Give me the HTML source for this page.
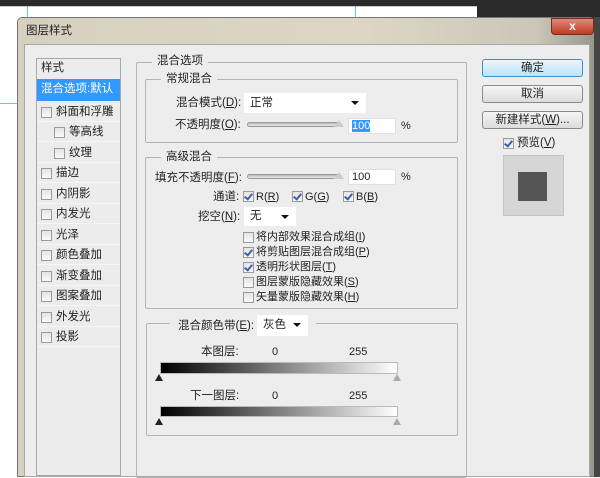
<!DOCTYPE html>
<html><head><meta charset="utf-8"><style>
*{margin:0;padding:0;box-sizing:border-box}
body{width:600px;height:477px;overflow:hidden;background:#fff;position:relative;font-family:"Liberation Sans","Noto Sans CJK SC",sans-serif;font-size:11px;color:#222}
.a{position:absolute}
.t{position:absolute;white-space:nowrap;line-height:14px}
.box{position:absolute;border:1px solid #b4b4b4;border-radius:2px}
.lg{position:absolute;background:#ededed;padding:0 5px;line-height:14px;font-size:11.5px}
.cb{position:absolute;width:11px;height:11px;border:1px solid #9a9a9a;background:linear-gradient(#e4e4e4,#fafafa)}
.cb.on::after{content:"";position:absolute;left:2px;top:0px;width:3px;height:6px;border:solid #3a5fb0;border-width:0 2px 2px 0;transform:rotate(40deg)}
.btn{position:absolute;left:482px;width:101px;height:18px;border:1px solid #8a8a8a;border-radius:3px;background:linear-gradient(#f6f6f6,#dcdcdc);text-align:center;line-height:16px;font-size:11.5px}
.dd{position:absolute;background:#fff;line-height:20px;padding-left:6px;font-size:11.5px}
.dd::after{content:"";position:absolute;right:7px;top:8px;border:4px solid transparent;border-top:4px solid #111;border-bottom:0}
.sl{position:absolute;height:5px;border:1px solid #999;border-radius:3px;background:linear-gradient(#bbb,#e8e8e8)}
.inp{position:absolute;background:#fff;border:1px solid #e0e0e0;line-height:14px;padding-left:3px}
.li{position:absolute;left:37px;width:83px;height:20px;border-bottom:1px solid #f6f6f6;line-height:21px;font-size:11.5px}
.li .cb{top:5px}
</style></head><body>
<div class="a" style="left:0;top:0;width:600px;height:6px;background:#2a2a2a"></div>
<div class="a" style="left:477px;top:0;width:123px;height:18px;background:#2a2a2a"></div>
<div class="a" style="left:0;top:6px;width:477px;height:1px;background:#ccc"></div>
<div class="a" style="left:27px;top:6px;width:1px;height:12px;background:#4dd"></div>
<div class="a" style="left:355px;top:6px;width:1px;height:12px;background:#4dd"></div>
<div class="a" style="left:0;top:103px;width:18px;height:1px;background:#4dd"></div>
<div class="a" style="left:17px;top:17px;width:578px;height:460px;background:linear-gradient(90deg,#d6d0bf,#ddd6c4 60%,#cbc6b8 90%,#9a968c);border:1px solid #777;border-radius:5px 5px 0 0"></div>
<div class="a" style="left:594px;top:17px;width:6px;height:460px;background:#444"></div>
<div class="t" style="left:26px;top:24px;font-size:11.5px">图层样式</div>
<div class="a" style="left:551px;top:18px;width:43px;height:17px;border-radius:0 0 4px 4px;background:linear-gradient(#e08a7a,#c23b22);border:1px solid #7a2a1a;color:#fff;text-align:center;font-weight:bold;line-height:15px;font-size:12px">x</div>
<div class="a" style="left:24px;top:44px;width:566px;height:433px;background:#ededed;border:1px solid #a9a9a9"></div>
<div class="a" style="left:36px;top:58px;width:85px;height:418px;border:1px solid #a8a8a8;background:#ececec"></div>
<div class="t" style="left:41px;top:61px;font-size:11.5px">样式</div>
<div class="a" style="left:37px;top:79px;width:83px;height:22px;background:#3399ff;color:#fff;line-height:21px;padding-left:4px;font-size:11.5px">混合选项:默认</div>
<div class="li" style="top:102px"><span class="cb" style="left:4px"></span><span class="a" style="left:19px">斜面和浮雕</span></div>
<div class="li" style="top:122px"><span class="cb" style="left:17px"></span><span class="a" style="left:32px">等高线</span></div>
<div class="li" style="top:143px"><span class="cb" style="left:17px"></span><span class="a" style="left:32px">纹理</span></div>
<div class="li" style="top:163px"><span class="cb" style="left:4px"></span><span class="a" style="left:19px">描边</span></div>
<div class="li" style="top:184px"><span class="cb" style="left:4px"></span><span class="a" style="left:19px">内阴影</span></div>
<div class="li" style="top:204px"><span class="cb" style="left:4px"></span><span class="a" style="left:19px">内发光</span></div>
<div class="li" style="top:225px"><span class="cb" style="left:4px"></span><span class="a" style="left:19px">光泽</span></div>
<div class="li" style="top:245px"><span class="cb" style="left:4px"></span><span class="a" style="left:19px">颜色叠加</span></div>
<div class="li" style="top:266px"><span class="cb" style="left:4px"></span><span class="a" style="left:19px">渐变叠加</span></div>
<div class="li" style="top:286px"><span class="cb" style="left:4px"></span><span class="a" style="left:19px">图案叠加</span></div>
<div class="li" style="top:307px"><span class="cb" style="left:4px"></span><span class="a" style="left:19px">外发光</span></div>
<div class="li" style="top:327px"><span class="cb" style="left:4px"></span><span class="a" style="left:19px">投影</span></div>
<div class="box" style="left:136px;top:62px;width:331px;height:416px"></div>
<div class="lg" style="left:152px;top:54px">混合选项</div>
<div class="box" style="left:145px;top:79px;width:313px;height:64px"></div>
<div class="lg" style="left:161px;top:72px">常规混合</div>
<div class="t" style="left:176px;top:96px;font-size:11.5px">混合模式(<u>D</u>):</div>
<div class="dd" style="left:244px;top:93px;width:122px;height:20px">正常</div>
<div class="t" style="left:175px;top:118px;font-size:11.5px">不透明度(<u>O</u>):</div>
<div class="sl" style="left:247px;top:122px;width:93px"></div>
<div class="a" style="left:334px;top:120px;border:5px solid transparent;border-bottom:7px solid #ccc;border-top:0"></div>
<div class="inp" style="left:348px;top:118px;width:48px;height:16px"><span style="background:#3399ff;color:#fff">100</span></div>
<div class="t" style="left:401px;top:119px">%</div>
<div class="box" style="left:145px;top:157px;width:313px;height:152px"></div>
<div class="lg" style="left:161px;top:150px">高级混合</div>
<div class="t" style="left:155px;top:171px;font-size:11.5px">填充不透明度(<u>F</u>):</div>
<div class="sl" style="left:247px;top:174px;width:93px"></div>
<div class="a" style="left:334px;top:172px;border:5px solid transparent;border-bottom:7px solid #ccc;border-top:0"></div>
<div class="inp" style="left:348px;top:169px;width:48px;height:16px">100</div>
<div class="t" style="left:401px;top:170px">%</div>
<div class="t" style="left:213px;top:190px;font-size:11.5px">通道:</div>
<div class="cb on" style="left:243px;top:191px"></div><div class="t" style="left:256px;top:190px">R(<u>R</u>)</div>
<div class="cb on" style="left:292px;top:191px"></div><div class="t" style="left:305px;top:190px">G(<u>G</u>)</div>
<div class="cb on" style="left:343px;top:191px"></div><div class="t" style="left:356px;top:190px">B(<u>B</u>)</div>
<div class="t" style="left:198px;top:210px;font-size:11.5px">挖空(<u>N</u>):</div>
<div class="dd" style="left:244px;top:207px;width:52px;height:19px;line-height:19px">无</div>
<div class="cb" style="left:243px;top:232px"></div><div class="t" style="left:256px;top:230px">将内部效果混合成组(<u>I</u>)</div>
<div class="cb on" style="left:243px;top:247px"></div><div class="t" style="left:256px;top:245px">将剪贴图层混合成组(<u>P</u>)</div>
<div class="cb on" style="left:243px;top:262px"></div><div class="t" style="left:256px;top:260px">透明形状图层(<u>T</u>)</div>
<div class="cb" style="left:243px;top:277px"></div><div class="t" style="left:256px;top:275px">图层蒙版隐藏效果(<u>S</u>)</div>
<div class="cb" style="left:243px;top:292px"></div><div class="t" style="left:256px;top:290px">矢量蒙版隐藏效果(<u>H</u>)</div>
<div class="box" style="left:146px;top:323px;width:312px;height:113px"></div>
<div class="a" style="left:170px;top:318px;width:88px;height:14px;background:#ededed"></div>
<div class="a" style="left:308px;top:318px;width:8px;height:14px;background:#ededed"></div>
<div class="t" style="left:178px;top:319px;font-size:11.5px">混合颜色带(<u>E</u>):</div>
<div class="dd" style="left:257px;top:315px;width:51px;height:21px">灰色</div>
<div class="t" style="left:201px;top:345px;font-size:11.5px">本图层:</div>
<div class="t" style="left:272px;top:345px">0</div><div class="t" style="left:349px;top:345px">255</div>
<div class="a" style="left:160px;top:362px;width:238px;height:12px;border:1px solid #bbb;background:linear-gradient(90deg,#000,#fff)"></div>
<div class="a" style="left:155px;top:374px;border:4px solid transparent;border-bottom:7px solid #222;border-top:0"></div>
<div class="a" style="left:393px;top:374px;border:4px solid transparent;border-bottom:7px solid #aaa;border-top:0"></div>
<div class="t" style="left:190px;top:389px;font-size:11.5px">下一图层:</div>
<div class="t" style="left:272px;top:389px">0</div><div class="t" style="left:349px;top:389px">255</div>
<div class="a" style="left:160px;top:406px;width:238px;height:11px;border:1px solid #bbb;background:linear-gradient(90deg,#000,#fff)"></div>
<div class="a" style="left:155px;top:418px;border:4px solid transparent;border-bottom:7px solid #222;border-top:0"></div>
<div class="a" style="left:393px;top:418px;border:4px solid transparent;border-bottom:7px solid #aaa;border-top:0"></div>
<div class="btn" style="top:59px;border-color:#3c90c8;background:linear-gradient(#eaf6fd,#bfe3f7)">确定</div>
<div class="btn" style="top:85px">取消</div>
<div class="btn" style="top:111px">新建样式(<u>W</u>)...</div>
<div class="cb on" style="left:503px;top:138px"></div>
<div class="t" style="left:517px;top:136px;font-size:11.5px">预览(<u>V</u>)</div>
<div class="a" style="left:503px;top:155px;width:61px;height:61px;background:#d6d6d6;border:1px solid #c4c4c4"></div>
<div class="a" style="left:518px;top:172px;width:29px;height:29px;background:#555"></div>
</body></html>
